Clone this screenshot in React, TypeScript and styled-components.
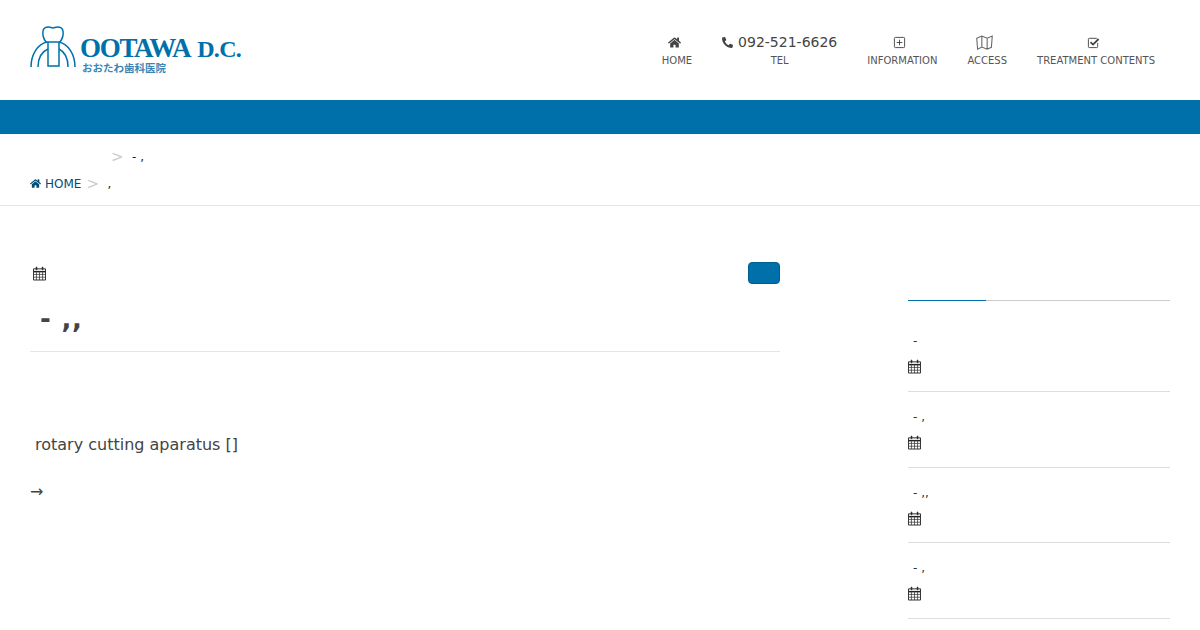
import styled, { createGlobalStyle } from "styled-components"
import { FaHome, FaPhoneAlt } from "react-icons/fa"

const brand = "#0070aa"
const text = "#333"

const GlobalStyle = createGlobalStyle`
  html, body {
    margin: 0;
    padding: 0;
    background: #fff;
    color: ${text};
    font-family: "DejaVu Sans", sans-serif;
    overflow: hidden;
  }
  * { box-sizing: border-box; }
`

function CalendarIcon() {
  return <CalendarSvg viewBox="0 0 14 15" fill="none" stroke="#222" strokeWidth="1">
    <path d="M.5 2.500h13v12H.5z" />
    <path d="M.5 5.500h13" strokeWidth="1.600" />
    <path d="M.5 8.500h13M.5 11.500h13M3.700 5.500v9M7 5.500v9M10.300 5.500v9" strokeWidth=".8" stroke="#333" />
    <path d="M3.500 .5h.6v3h-.6zM10 .5h.6v3H10z" strokeWidth="1" />
  </CalendarSvg>
}

function Logo() {
  return <LogoWrapper>
    <LogoMark viewBox="0 0 46 42" fill="none" stroke={brand} strokeWidth="1.500">
      <path d="M16 16C13 12 12.500 8 13 5c.5-3 3-4 5.500-4 2 0 3 1 4.500 1s2.500-1 4.500-1c2.500 0 5 1 5.500 4 .5 3 0 7-3 11z" />
      <path d="M18 16v24h11V16" />
      <path d="M1 41C1 28 8 18 17 16" />
      <path d="M8 41c0-8 3-15 10-18" />
      <path d="M45 41C45 28 38 18 29 16" />
      <path d="M38 41c0-8-3-15-9-18" />
    </LogoMark>
    <LogoText>
      <LogoName>OOTAWA<LogoSuffix>D.C.</LogoSuffix></LogoName>
      <LogoKana>おおたわ歯科医院</LogoKana>
    </LogoText>
  </LogoWrapper>
}

function PlusSquareIcon() {
  return <NavSvg viewBox="0 0 14 14"><path d="M2.500 1.500h9a1 1 0 0 1 1 1v9a1 1 0 0 1-1 1h-9a1 1 0 0 1-1-1v-9a1 1 0 0 1 1-1zM7 4v6M4 7h6" /></NavSvg>
}

function MapIcon() {
  return <MapSvg viewBox="0 0 16 14"><path d="M.7 3l4.800-2 5 2 4.800-2-.8 10.500-4 1.800-5-2-4 2zM5.500 1v10.300M10.500 3v10.300" /></MapSvg>
}

function CheckSquareIcon() {
  return <NavSvg viewBox="0 0 14 14"><path d="M11.500 7.500v4a1 1 0 0 1-1 1h-8a1 1 0 0 1-1-1v-8a1 1 0 0 1 1-1h8" /><path d="M3.800 6.500l2.700 2.700 6-6" strokeWidth="2" /></NavSvg>
}

const navItems = [
  { label: "INFORMATION", Icon: PlusSquareIcon },
  { label: "ACCESS", Icon: MapIcon },
  { label: "TREATMENT CONTENTS", Icon: CheckSquareIcon },
]

const posts = ["-", "- ,", "- ,,", "- ,"]

export default function App() {
  return <Page>
    <GlobalStyle />
    <Header>
      <Logo />
      <Nav>
        <NavItem>
          <NavIcon><FaHome size={13} /></NavIcon>
          <NavLabel>HOME</NavLabel>
        </NavItem>
        <NavItem>
          <Phone><FaPhoneAlt size={11} />092-521-6626</Phone>
          <NavLabel>TEL</NavLabel>
        </NavItem>
        {navItems.map(item => <NavItem key={item.label}>
          <NavIcon><item.Icon /></NavIcon>
          <NavLabel>{item.label}</NavLabel>
        </NavItem>)}
      </Nav>
    </Header>
    <BlueBar />
    <Breadcrumbs>
      <CrumbRow $indent={81}>
        <Separator>&gt;</Separator>
        <CrumbCurrent>- ,</CrumbCurrent>
      </CrumbRow>
      <CrumbRow>
        <CrumbLink><FaHome size={11} />HOME</CrumbLink>
        <Separator>&gt;</Separator>
        <CrumbCurrent>,</CrumbCurrent>
      </CrumbRow>
    </Breadcrumbs>
    <Main>
      <Article>
        <MetaRow>
          <CalendarIcon />
          <CategoryButton />
        </MetaRow>
        <Title>- ,,</Title>
        <BodyText>rotary cutting aparatus []</BodyText>
        <Arrow>→</Arrow>
      </Article>
      <Sidebar>
        <SidebarHeading />
        {posts.map((post, i) => <SidebarPost key={i}>
          <SidebarTitle>{post}</SidebarTitle>
          <CalendarIcon />
        </SidebarPost>)}
      </Sidebar>
    </Main>
  </Page>
}

const Page = styled.div`
  width: 1200px;
  height: 630px;
  overflow: hidden;
`

const Header = styled.header`
  height: 100px;
  padding: 0 30px;
  display: flex;
  justify-content: space-between;
  align-items: center;
`

const LogoWrapper = styled.div`
  display: flex;
  align-items: flex-start;
  gap: 4px;
`

const LogoMark = styled.svg`
  width: 46px;
  height: 42px;
  display: block;
`

const LogoText = styled.div`
  display: flex;
  flex-direction: column;
  padding-top: 9px;
`

const LogoName = styled.div`
  font-family: "Liberation Serif", serif;
  font-weight: 700;
  font-size: 27px;
  line-height: 26px;
  letter-spacing: -1.300px;
  color: ${brand};
  white-space: nowrap;
`

const LogoSuffix = styled.span`
  margin-left: 7px;
  font-size: 24px;
  letter-spacing: -.7px;
`

const LogoKana = styled.div`
  font-family: "Noto Sans CJK JP", sans-serif;
  font-weight: 700;
  font-size: 10.500px;
  line-height: 12px;
  margin-left: 2px;
  color: #3a87b5;
  white-space: nowrap;
`

const Nav = styled.nav`
  display: flex;
`

const NavItem = styled.div`
  padding: 0 15px;
  display: flex;
  flex-direction: column;
  align-items: center;
`

const NavIcon = styled.div`
  height: 19px;
  margin: 0 5px 1px 0;
  display: flex;
  align-items: center;
  color: #444;
`

const NavSvg = styled.svg`
  width: 13px;
  height: 13px;
  fill: none;
  stroke: #444;
  stroke-width: 1;
`

const MapSvg = styled(NavSvg)`
  width: 17px;
  height: 15px;
  stroke: #666;
`

const Phone = styled.div`
  height: 19px;
  margin-bottom: 1px;
  display: flex;
  align-items: center;
  gap: 5px;
  font-size: 14px;
  color: #444;
  white-space: nowrap;
`

const NavLabel = styled.div`
  margin-top: 1px;
  font-size: 10px;
  line-height: 14px;
  color: #555;
  white-space: nowrap;
`

const BlueBar = styled.div`
  height: 34px;
  background-color: ${brand};
`

const Breadcrumbs = styled.div`
  height: 72px;
  padding: 9px 30px 0;
  border-bottom: 1px solid #e5e5e5;
  display: flex;
  flex-direction: column;
`

const CrumbRow = styled.div<{ $indent?: number }>`
  height: 27px;
  padding-left: ${props => props.$indent ?? 0}px;
  display: flex;
  align-items: center;
  gap: 5px;
  font-size: 12px;
`

const CrumbLink = styled.span`
  display: flex;
  align-items: center;
  gap: 4px;
  color: #004d78;
`

const Separator = styled.span`
  width: 16px;
  font-size: 15px;
  color: #ccc;
`

const CrumbCurrent = styled.span`
  color: #222;
`

const Main = styled.main`
  padding: 0 30px;
  display: flex;
  justify-content: space-between;
`

const Article = styled.article`
  width: 750px;
  padding-top: 56px;
`

const MetaRow = styled.div`
  height: 22px;
  padding-left: 3px;
  display: flex;
  justify-content: space-between;
  align-items: center;
`

const CalendarSvg = styled.svg`
  width: 13px;
  height: 15px;
  display: block;
`

const CategoryButton = styled.div`
  width: 32px;
  height: 22px;
  background-color: ${brand};
  border: 1px solid #005f90;
  border-radius: 4px;
`

const Title = styled.h1`
  margin: 18px 0 0;
  height: 50px;
  padding-left: 10px;
  border-bottom: 1px solid #e5e5e5;
  color: #444;
  font-size: 26px;
  font-weight: 700;
  line-height: 34px;
  letter-spacing: .8px;
`

const BodyText = styled.p`
  margin: 82px 0 0;
  padding-left: 5px;
  font-size: 16px;
  line-height: 22px;
  color: #444;
`

const Arrow = styled.p`
  margin: 25px 0 0;
  font-size: 16px;
  line-height: 22px;
  color: #444;
`

const Sidebar = styled.aside`
  width: 262px;
  padding-top: 94px;
`

const SidebarHeading = styled.h2`
  margin: 0;
  height: 1px;
  background: linear-gradient(to right, ${brand} 78px, #ccc 78px);
`

const SidebarPost = styled.div`
  height: 75.700px;
  padding-top: 17px;
  border-bottom: 1px solid #ddd;
  display: flex;
  flex-direction: column;
  gap: 10px;
  &:first-of-type {
    height: 91px;
    padding-top: 32px;
  }
`

const SidebarTitle = styled.div`
  padding-left: 5px;
  font-size: 12px;
  line-height: 16px;
`
